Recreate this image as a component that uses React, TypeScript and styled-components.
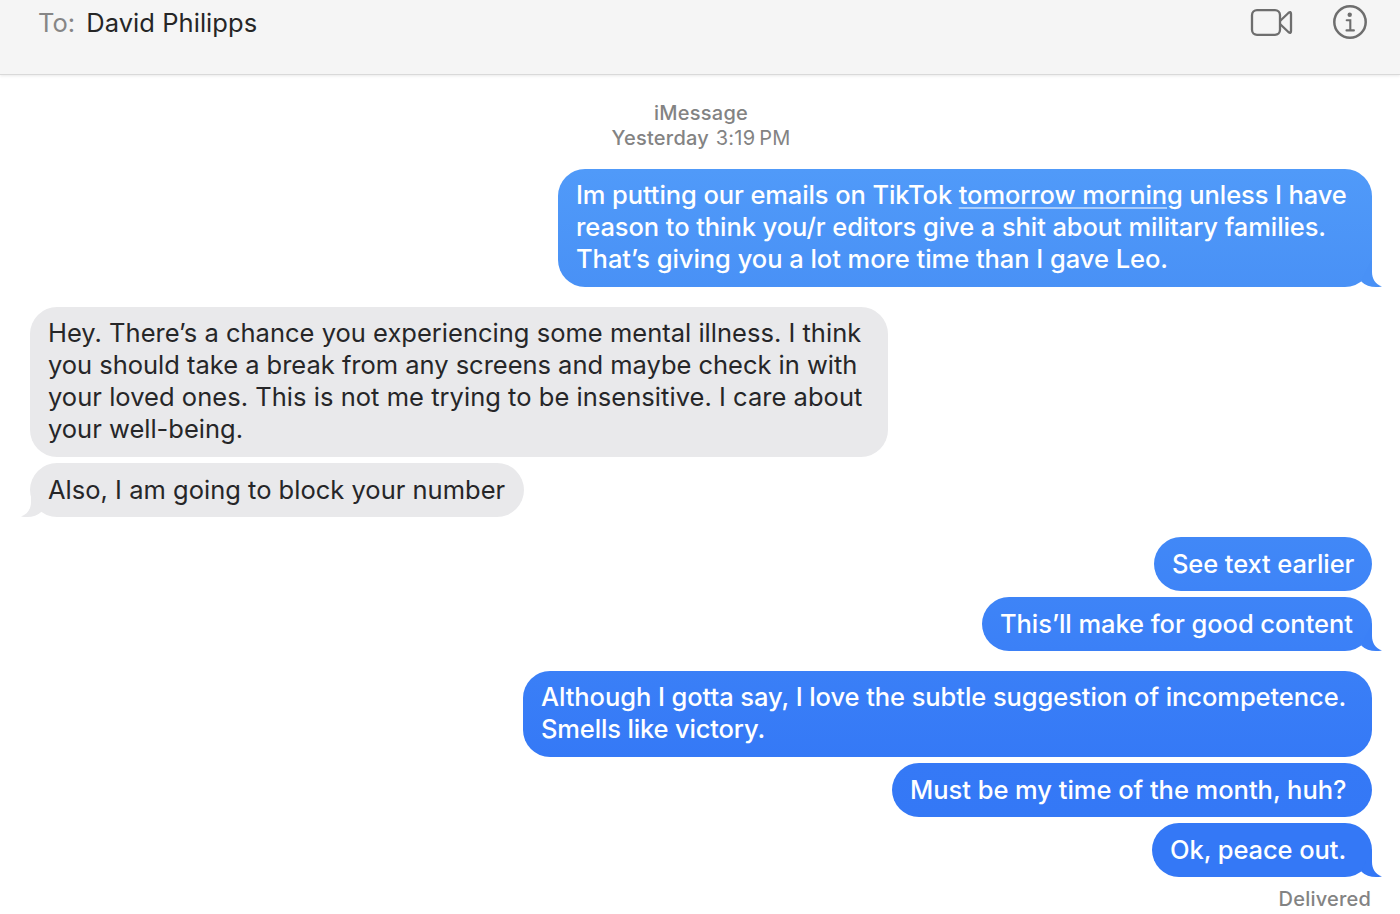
import React from "react"
import styled, { createGlobalStyle } from "styled-components"

type Side = "sent" | "received"

interface Line {
  text: string
  link?: string
  rest?: string
  tracking?: number
}

interface Message {
  side: Side
  width: number
  fill: string
  tailFill?: string
  lines: Line[]
}

const GREY = "#e9e9eb"

const messages: Message[] = [
  {
    side: "sent",
    width: 814,
    fill: "linear-gradient(#509af9, #4991f6)",
    tailFill: "#4991f6",
    lines: [
      {
        text: "Im putting our emails on TikTok ",
        link: "tomorrow morning",
        rest: " unless I have",
        tracking: -0.1,
      },
      {
        text: "reason to think you/r editors give a shit about military families.",
        tracking: -0.08,
      },
      {
        text: "That’s giving you a lot more time than I gave Leo.",
        tracking: -0.04,
      },
    ],
  },
  {
    side: "received",
    width: 858,
    fill: GREY,
    lines: [
      {
        text: "Hey. There’s a chance you experiencing some mental illness. I think",
        tracking: 0.015,
      },
      {
        text: "you should take a break from any screens and maybe check in with",
        tracking: -0.02,
      },
      {
        text: "your loved ones. This is not me trying to be insensitive. I care about",
        tracking: 0.035,
      },
      { text: "your well-being." },
    ],
  },
  {
    side: "received",
    width: 494,
    fill: GREY,
    tailFill: GREY,
    lines: [{ text: "Also, I am going to block your number", tracking: 0.01 }],
  },
  {
    side: "sent",
    width: 218,
    fill: "linear-gradient(#4188f7, #3e84f7)",
    lines: [{ text: "See text earlier", tracking: -0.1 }],
  },
  {
    side: "sent",
    width: 390,
    fill: "linear-gradient(#3e84f7, #3b80f7)",
    tailFill: "#3b80f7",
    lines: [{ text: "This’ll make for good content", tracking: -0.06 }],
  },
  {
    side: "sent",
    width: 849,
    fill: "linear-gradient(#3a7ff7, #3579f6)",
    lines: [
      {
        text: "Although I gotta say, I love the subtle suggestion of incompetence.",
        tracking: -0.075,
      },
      { text: "Smells like victory.", tracking: -0.15 },
    ],
  },
  {
    side: "sent",
    width: 480,
    fill: "linear-gradient(#3579f6, #3478f6)",
    lines: [{ text: "Must be my time of the month, huh?", tracking: -0.03 }],
  },
  {
    side: "sent",
    width: 220,
    fill: "#3478f6",
    tailFill: "#3478f6",
    lines: [{ text: "Ok, peace out.", tracking: -0.08 }],
  },
]

const GlobalStyle = createGlobalStyle`
  * {
    box-sizing: border-box;
  }
  body {
    margin: 0;
    background-color: #fff;
    font-family: Inter, "Liberation Sans", sans-serif;
    overflow: hidden;
  }
`

const WindowStyle = styled.div`
  height: 914px;
  background-color: #fff;
`

const HeaderStyle = styled.header`
  height: 75px;
  padding: 3px 32px 0 38px;
  display: flex;
  align-items: flex-start;
  justify-content: space-between;
  background-color: #f5f5f5;
  border-bottom: 1px solid #d9d9d9;
  box-shadow: 0 1px 3px rgba(0, 0, 0, 0.09);
`

const RecipientStyle = styled.div`
  display: flex;
  gap: 11px;
  padding-top: 4px;
  font-size: 25.5px;
  line-height: 32px;
  letter-spacing: 0.05px;
  color: #262626;
`

const ToStyle = styled.span`
  color: #868686;
`

const ActionsStyle = styled.div`
  display: flex;
  gap: 38px;
`

const ThreadStyle = styled.main`
  display: flex;
  flex-direction: column;
  padding: 26px 28px 0 30px;
`

const StampStyle = styled.div`
  text-align: center;
  font-size: 20px;
  font-weight: 500;
  line-height: 25px;
  letter-spacing: 0.25px;
  color: #838383;
  margin-bottom: 18px;
`

const TimeStyle = styled.span`
  margin-left: 1px;
  font-weight: 400;
`

const BubbleStyle = styled.div<{
  $side: Side
  $width: number
  $fill: string
  $last: boolean
  $single: boolean
}>`
  position: relative;
  align-self: ${(p) => (p.$side === "sent" ? "flex-end" : "flex-start")};
  width: ${(p) => p.$width}px;
  margin-bottom: ${(p) => (p.$last ? 20 : 6)}px;
  padding: ${(p) => (p.$single ? "11px 18px" : "10px 18px 12px")};
  border-radius: 27px;
  background: ${(p) => p.$fill};
  color: ${(p) => (p.$side === "sent" ? "#fff" : "#262628")};
  font-weight: ${(p) => (p.$side === "sent" ? 500 : 400)};
`

const LineStyle = styled.div<{ $tracking: number }>`
  height: 32px;
  line-height: 32px;
  font-size: 25.5px;
  letter-spacing: ${(p) => p.$tracking}px;
  white-space: pre;
`

const LinkStyle = styled.span`
  text-decoration: underline;
  text-decoration-color: rgba(255, 255, 255, 0.5);
  text-decoration-thickness: 2px;
  text-underline-offset: 3px;
`

const TailStyle = styled.svg<{ $side: Side }>`
  position: absolute;
  bottom: 0;
  ${(p) =>
    p.$side === "sent" ? "right: -10px;" : "left: -9px; transform: scaleX(-1);"}
`

const DeliveredStyle = styled.div`
  align-self: flex-end;
  margin-top: -10px;
  margin-right: 1px;
  font-size: 20px;
  font-weight: 500;
  line-height: 25px;
  letter-spacing: 0.2px;
  color: #838383;
`

function VideoIcon() {
  return (
    <svg
      width="44"
      height="34"
      viewBox="0 0 44 34"
      fill="none"
      stroke="#6e6e6e"
      strokeWidth="2.3"
      strokeLinejoin="round"
    >
      <rect x="2" y="7.2" width="28" height="24.6" rx="5" />
      <path d="M30 18 38.4 10Q41 8 41 10.8V28.2Q41 31 38.4 29L30 21" />
    </svg>
  )
}

function InfoIcon() {
  return (
    <svg width="36" height="38" viewBox="0 0 36 38" fill="none" stroke="#6e6e6e">
      <circle cx="18" cy="19" r="15.7" strokeWidth="2.5" />
      <circle cx="17.7" cy="11.7" r="2.2" fill="#6e6e6e" stroke="none" />
      <path
        d="M14.7 17.3h3.6v10M14.5 27.4h7.4"
        strokeWidth="2.1"
        strokeLinecap="round"
      />
    </svg>
  )
}

function Tail({ side, fill }: { side: Side; fill: string }) {
  return (
    <TailStyle $side={side} width="24" height="30" viewBox="0 0 24 30">
      <path
        d="M14 2V15C14 21.5 17.4 27.4 24 29.4C16 30.9 8.5 29.6 3.2 24.4L8 14Z"
        fill={fill}
      />
    </TailStyle>
  )
}

function Bubble({ message, last }: { message: Message; last: boolean }) {
  const { side, width, fill, tailFill, lines } = message
  return (
    <BubbleStyle
      $side={side}
      $width={width}
      $fill={fill}
      $last={last}
      $single={lines.length === 1}
    >
      {tailFill && <Tail side={side} fill={tailFill} />}
      {lines.map((line) => (
        <LineStyle key={line.text} $tracking={line.tracking ?? 0}>
          {line.text}
          {line.link && <LinkStyle>{line.link}</LinkStyle>}
          {line.rest}
        </LineStyle>
      ))}
    </BubbleStyle>
  )
}

function App() {
  return (
    <WindowStyle>
      <GlobalStyle />
      <HeaderStyle>
        <RecipientStyle>
          <ToStyle>To:</ToStyle>
          <span>David Philipps</span>
        </RecipientStyle>
        <ActionsStyle>
          <VideoIcon />
          <InfoIcon />
        </ActionsStyle>
      </HeaderStyle>
      <ThreadStyle>
        <StampStyle>
          iMessage
          <br />
          Yesterday <TimeStyle>3:19{"\u2009"}PM</TimeStyle>
        </StampStyle>
        {messages.map((message, i) => (
          <Bubble
            key={i}
            message={message}
            last={
              message.tailFill !== undefined ||
              messages[i + 1]?.side !== message.side
            }
          />
        ))}
        <DeliveredStyle>Delivered</DeliveredStyle>
      </ThreadStyle>
    </WindowStyle>
  )
}

export default App
